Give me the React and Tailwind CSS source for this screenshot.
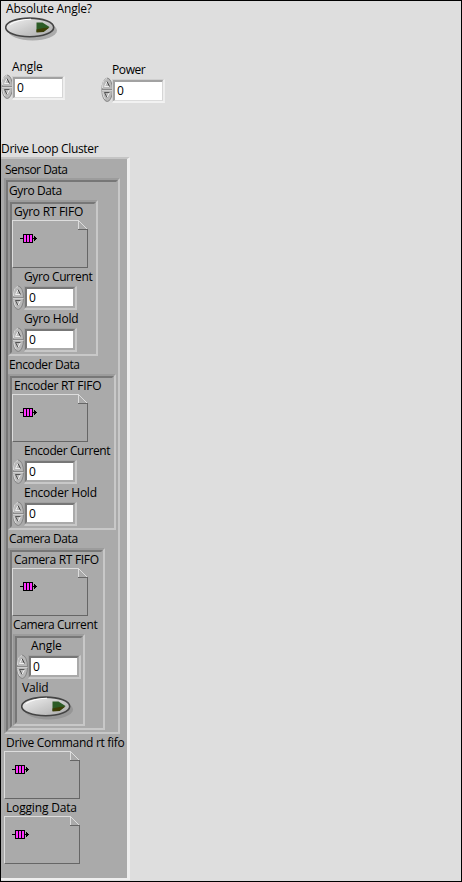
import React from 'react';

function Label({ className = '', tight = 'tracking-[-0.4px]', children }) {
  return (
    <div className={`h-4 whitespace-nowrap font-["Open_Sans",sans-serif] text-[12px] leading-4 text-black ${tight} ${className}`}>
      {children}
    </div>
  );
}

function Cluster({ className = '', children }) {
  return (
    <div className={`border-2 border-t-[#9c9c9c] border-l-[#969696] border-r-[#c8c8c8] border-b-[#c8c8c8] ${className}`}>
      <div className="h-full w-full border-2 border-t-[#777] border-l-[#777] border-r-[#aaa] border-b-[#aaa] bg-[#aaa]">{children}</div>
    </div>
  );
}

function Spinner() {
  return (
    <svg className="block shrink-0" width="12" height="25" viewBox="0 0 12 25">
      <ellipse cx="6.200" cy="12.800" rx="5.300" ry="11.700" fill="#b8b8b8" stroke="#858585" />
      <path d="M1.500 11Q1.500 2 6 1.500M1.700 14.500Q2 20 4 22" fill="none" stroke="#dedede" />
      <path d="M1 12.500h10.500" stroke="#8a8a8a" />
      <path d="M1 13.500h10.500" stroke="#d0d0d0" />
      <path d="M3.500 9.500h5M3.500 9.500 6 4.500" fill="none" stroke="#eee" />
      <path d="M6 4.500 8.500 9.500" stroke="#444" />
      <path d="M8.500 15.500 6 20.500" stroke="#eee" />
      <path d="M3.500 15.500h5M3.500 15.500 6 20.500" stroke="#555" fill="none" />
    </svg>
  );
}

function Numeric({ className = '', light = false }) {
  return (
    <div className={`flex h-[25px] ${className}`}>
      <Spinner />
      <div className={`h-6 w-[53px] shrink-0 border border-r-2 border-b-2 ${light ? 'mt-0.5 -ml-px border-[#cfcfcf] border-r-[#eee] border-b-[#f2f2f2]' : 'mt-px border-[#a0a0a0] border-r-[#c8c8c8] border-b-[#c8c8c8]'}`}>
        <div className={`h-full border-2 ${light ? 'border-r border-b border-[#a2a2a2] border-r-[#d6d6d6] border-b-[#dcdcdc] pl-0.5' : 'border-[#777] border-r-[#aaa] border-b-[#aaa] pl-0.5'} bg-white font-["Open_Sans",sans-serif] text-[12px] leading-[17px] text-black`}>
          0
        </div>
      </div>
    </div>
  );
}

function Fifo({ className = '' }) {
  return (
    <svg className={`block ${className}`} width="76" height="48" viewBox="0 0 76 48" shapeRendering="crispEdges">
      <path d="M.5 47V.5H66.500V9" fill="none" stroke="#ddd" />
      <path d="M66.500 .5 75.500 9.500" fill="none" stroke="#ddd" />
      <path d="M66 9.500h9.500v38H1" fill="none" stroke="#666" />
      <path d="M8 18.500h17" stroke="#000" />
      <path d="M22.500 16v5M23.500 17v3" stroke="#000" />
      <rect x="11" y="14" width="10" height="9" fill="#000" />
      <path d="M12 15h2v7h-2zM15 15h2v7h-2zM18 15h2v7h-2z" fill="#ff33ff" />
    </svg>
  );
}

function Toggle({ className = '' }) {
  return (
    <svg className={`block ${className}`} width="54" height="25" viewBox="0 0 54 25">
      <defs>
        <linearGradient id="face" x1="0" y1="0" x2="1" y2="1">
          <stop offset="0" stopColor="#f2f2f2" />
          <stop offset=".5" stopColor="#ccc" />
          <stop offset="1" stopColor="#aaa" />
        </linearGradient>
      </defs>
      <ellipse cx="27.500" cy="13.500" rx="24.500" ry="10" fill="#888" opacity=".6" />
      <ellipse cx="24.700" cy="10.400" rx="24" ry="9.300" fill="url(#face)" stroke="#444" strokeWidth="1.600" />
      <path d="M5 7.500Q13 2.500 26 2.200" fill="none" stroke="#fff" />
      <path d="M31.500 5.500h6l7 4.500-6 5h-7z" fill="#2c5c26" />
      <path d="M31.500 15.500v-3l7-1.500 6-.5-6 4.500z" fill="#3d3d05" />
    </svg>
  );
}

function SensorCluster({ name, className }) {
  return (
    <Cluster className={className}>
      <Label tight="tracking-[-0.27px]" className="pl-0.5">{name} RT FIFO</Label>
      <Fifo />
      <Label className="mt-px pl-3">{name} Current</Label>
      <Numeric />
      <Label tight="tracking-[-0.23px]" className="mt-px pl-3">{name} Hold</Label>
      <Numeric />
    </Cluster>
  );
}

export default function App() {
  return (
    <div className="h-[882px] w-[462px] overflow-hidden border border-black bg-[#dedede]">
      <Label tight="tracking-[-0.2px]" className="pl-[5px]">Absolute Angle?</Label>
      <Toggle className="ml-1" />
      <div className="mt-[17px] flex h-[82px] items-start">
        <div className="w-[100px]">
          <Label tight="tracking-[-0.1px]" className="pl-[11px]">Angle</Label>
          <Numeric light className="-mt-px" />
        </div>
        <div className="pt-[3px]">
          <Label className="pl-[11px]">Power</Label>
          <Numeric light className="-mt-px" />
        </div>
      </div>
      <Label tight="tracking-[-0.33px]">Drive Loop Cluster</Label>
      <div className="h-[723px] w-[129px] border-t-2 border-r-[3px] border-b-2 border-t-[#c4c4c4] border-r-[#eee] border-b-[#eee] bg-[#aaa] pt-[3px]">
        <Label tight="tracking-[-0.5px]" className="pl-1">Sensor Data</Label>
        <Cluster className="ml-[3px] h-[556px] w-[116px]">
          <Label className="mt-px pl-px">Gyro Data</Label>
          <SensorCluster name="Gyro" className="mt-px h-[156px] w-[90px]" />
          <Label className="mt-px pl-px">Encoder Data</Label>
          <SensorCluster name="Encoder" className="mt-px h-[156px] w-[108px]" />
          <Label className="mt-px pl-px">Camera Data</Label>
          <Cluster className="mt-px h-[182px] w-[97px]">
            <Label tight="tracking-[-0.3px]" className="pl-0.5">Camera RT FIFO</Label>
            <Fifo />
            <Label className="mt-px pl-px">Camera Current</Label>
            <Cluster className="mt-px ml-px h-[92px] w-[72px]">
              <Label tight="tracking-[-0.1px]" className="pl-3.5">Angle</Label>
              <Numeric className="-ml-px" />
              <Label tight="tracking-[-0.15px]" className="mt-px pl-[5px]">Valid</Label>
              <Toggle className="ml-1" />
            </Cluster>
          </Cluster>
        </Cluster>
        <Label tight="tracking-[-0.29px]" className="mt-px pl-[5px]">Drive Command rt fifo</Label>
        <Fifo className="ml-[3px]" />
        <Label tight="tracking-[-0.17px]" className="mt-px pl-[5px]">Logging Data</Label>
        <Fifo className="ml-[3px]" />
      </div>
    </div>
  );
}
